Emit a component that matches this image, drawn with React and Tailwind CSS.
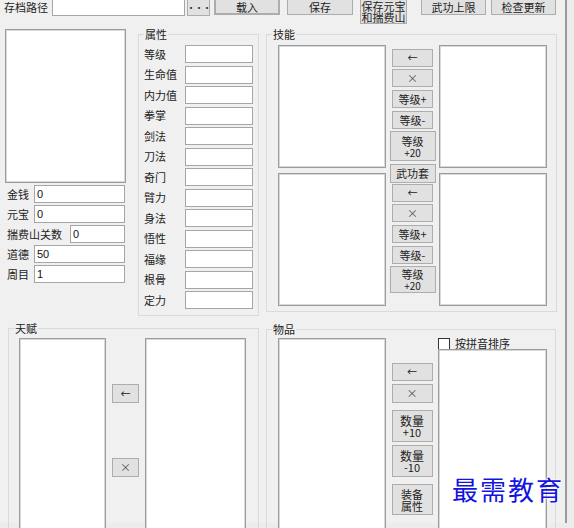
import React from 'react';

const font = { fontFamily: '"Noto Sans CJK SC", "Liberation Sans", sans-serif' };

const Btn = ({ className = '', children }) => (
  <div
    className={`flex flex-col items-center justify-center bg-[#e1e1e1] border border-[#adadad] text-[11px] leading-[11px] text-[#222] text-center shrink-0 ${className}`}
  >
    {children}
  </div>
);

const ListBox = ({ className = '' }) => (
  <div className={`bg-white border border-[#9c9c9c] shadow-[inset_0_0_0_1px_#d8d8d8] shrink-0 ${className}`} />
);

const TextBox = ({ className = '', value = '' }) => (
  <div
    className={`bg-white border border-[#a6a6a6] text-[11px] leading-[16px] pl-[2px] text-[#111] shrink-0 ${className}`}
    style={{ fontFamily: '"Liberation Sans", sans-serif' }}
  >
    {value}
  </div>
);

const Group = ({ title, className = '', children }) => (
  <div className={`relative border border-[#dadada] shrink-0 ${className}`}>
    <div className="absolute top-[-7px] left-[5px] px-[1px] bg-[#f0f0f0] text-[11px] leading-[12px] text-[#222]">
      {title}
    </div>
    {children}
  </div>
);

const attrs = ['等级', '生命值', '内力值', '拳掌', '剑法', '刀法', '奇门', '臂力', '身法', '悟性', '福缘', '根骨', '定力'];

const Arrow = () => <span className="text-[10px] leading-[10px]">←</span>;
const Cross = () => <span className="text-[11px] leading-[11px] text-[#555]">×</span>;

const SkillButtons = ({ first }) => (
  <>
    <Btn className={`w-[41px] h-[18px] ${first ? 'mt-[4px]' : 'mt-[1px]'}`}><Arrow /></Btn>
    <Btn className="w-[41px] h-[18px] mt-[2px]"><Cross /></Btn>
    <Btn className="w-[41px] h-[18px] mt-[3px]">等级+</Btn>
    <Btn className="w-[41px] h-[18px] mt-[3px]">等级-</Btn>
    <Btn className={`w-[46px] mt-[2px] gap-[1px] ${first ? 'h-[30px]' : 'h-[27px]'}`}>
      <span className="leading-[12px]">等级</span>
      <span className="text-[10px] leading-[10px]">+20</span>
    </Btn>
  </>
);

export default function App() {
  return (
    <div className="w-[574px] h-[528px] overflow-hidden bg-[#ececec]" style={font}>
      <div className="relative w-[567px] h-[528px] bg-[#f0f0f0] border-r-2 border-[#9a9a9a] text-[#222]">
        {/* top bar */}
        <div className="flex items-start -mt-[5px]">
          <div className="ml-[4px] w-[48px] mt-[6px] text-[11px] leading-[12px]">存档路径</div>
          <TextBox className="w-[133px] h-[21px]" />
          <Btn className="ml-[2px] w-[23px] h-[21px] pt-[4px]">
            <span className="text-[9px] leading-[9px] tracking-[-1px]">···</span>
          </Btn>
          <Btn className="ml-[4px] w-[66px] h-[20px] pt-[4px] border-2 border-[#2b7fd6]">载入</Btn>
          <Btn className="ml-[7px] w-[66px] h-[20px] pt-[4px]">保存</Btn>
          <Btn className="ml-[7px] w-[47px] h-[29px] pt-[4px] text-[10px] leading-[10px]">
            <span>保存元宝</span>
            <span>和揣费山</span>
          </Btn>
          <Btn className="ml-[14px] w-[65px] h-[20px] pt-[4px]">武功上限</Btn>
          <Btn className="ml-[5px] w-[65px] h-[20px] pt-[4px]">检查更新</Btn>
        </div>

        {/* upper body */}
        <div className="flex items-start mt-[4px]">
          <div className="ml-[5px] w-[122px] mt-[1px] flex flex-col">
            <ListBox className="w-[121px] h-[154px]" />
            <div className="mt-[2px] flex flex-col gap-[2px] text-[11px]">
              <div className="flex items-center h-[18px]">
                <span className="pl-[2px] w-[29px]">金钱</span>
                <TextBox className="w-[91px] h-[18px]" value="0" />
              </div>
              <div className="flex items-center h-[18px]">
                <span className="pl-[2px] w-[29px]">元宝</span>
                <TextBox className="w-[91px] h-[18px]" value="0" />
              </div>
              <div className="flex items-center h-[18px]">
                <span className="pl-[2px] w-[65px]">揣费山关数</span>
                <TextBox className="w-[55px] h-[18px]" value="0" />
              </div>
              <div className="flex items-center h-[18px]">
                <span className="pl-[2px] w-[29px]">道德</span>
                <TextBox className="w-[91px] h-[18px]" value="50" />
              </div>
              <div className="flex items-center h-[18px]">
                <span className="pl-[2px] w-[29px]">周目</span>
                <TextBox className="w-[91px] h-[18px]" value="1" />
              </div>
            </div>
          </div>

          <Group title="属性" className="ml-[11px] mt-[6px] w-[121px] h-[282px]">
            <div className="pt-[10px] pl-[5px] flex flex-col gap-[2.5px]">
              {attrs.map((a) => (
                <div key={a} className="flex items-center h-[18px]">
                  <span className="w-[41px] text-[11px]">{a}</span>
                  <TextBox className="w-[68px] h-[18px]" />
                </div>
              ))}
            </div>
          </Group>

          <Group title="技能" className="ml-[7px] mt-[6px] w-[291px] h-[278px]">
            <div className="pt-[10px] pl-[11px] flex items-start">
              <div className="flex flex-col w-[108px]">
                <ListBox className="w-[108px] h-[123px]" />
                <ListBox className="w-[108px] h-[133px] mt-[5px]" />
              </div>
              <div className="flex flex-col items-center w-[53px]">
                <SkillButtons first />
                <Btn className="w-[46px] h-[19px] mt-[3px]">武功套</Btn>
                <SkillButtons />
              </div>
              <div className="flex flex-col w-[108px]">
                <ListBox className="w-[108px] h-[123px]" />
                <ListBox className="w-[108px] h-[133px] mt-[5px]" />
              </div>
            </div>
          </Group>
        </div>

        {/* lower body */}
        <div className="flex items-start mt-[12px]">
          <Group title="天赋" className="ml-[8px] w-[251px] h-[220px]">
            <div className="pt-[9px] pl-[10px] flex items-start">
              <ListBox className="w-[87px] h-[210px]" />
              <div className="flex flex-col items-center w-[39px]">
                <Btn className="w-[27px] h-[19px] mt-[46px]"><Arrow /></Btn>
                <Btn className="w-[27px] h-[19px] mt-[55px]"><Cross /></Btn>
              </div>
              <ListBox className="w-[101px] h-[210px]" />
            </div>
          </Group>

          <Group title="物品" className="ml-[7px] mt-[1px] w-[290px] h-[220px]">
            <div className="pt-[8px] pl-[11px] flex items-start">
              <ListBox className="w-[108px] h-[210px]" />
              <div className="flex flex-col items-center w-[52px]">
                <Btn className="w-[41px] h-[18px] mt-[25px]"><Arrow /></Btn>
                <Btn className="w-[41px] h-[19px] mt-[3px]"><Cross /></Btn>
                <Btn className="w-[41px] h-[32px] mt-[7px] text-[12px] leading-[13px]">
                  <span>数量</span>
                  <span className="text-[11px] leading-[11px]">+10</span>
                </Btn>
                <Btn className="w-[41px] h-[32px] mt-[3px] text-[12px] leading-[13px]">
                  <span>数量</span>
                  <span className="text-[11px] leading-[11px]">-10</span>
                </Btn>
                <Btn className="w-[41px] h-[31px] mt-[7px] text-[11px] leading-[12px]">
                  <span>装备</span>
                  <span>属性</span>
                </Btn>
              </div>
              <div className="flex flex-col w-[109px]">
                <div className="flex items-center h-[11px]">
                  <div className="w-[12px] h-[12px] bg-white border border-[#333]" />
                  <span className="ml-[5px] text-[11px] leading-[11px]">按拼音排序</span>
                </div>
                <ListBox className="w-[109px] h-[200px]" />
              </div>
            </div>
          </Group>
        </div>

        <div
          className="absolute left-[452px] top-[478px] text-[26px] leading-[32px] tracking-[2px] text-[#1414e0] [text-shadow:0_0_2px_#fff,0_0_3px_#fff]"
          style={{ fontFamily: '"Noto Sans CJK SC", serif' }}
        >
          最需教育
        </div>
      </div>
    </div>
  );
}
